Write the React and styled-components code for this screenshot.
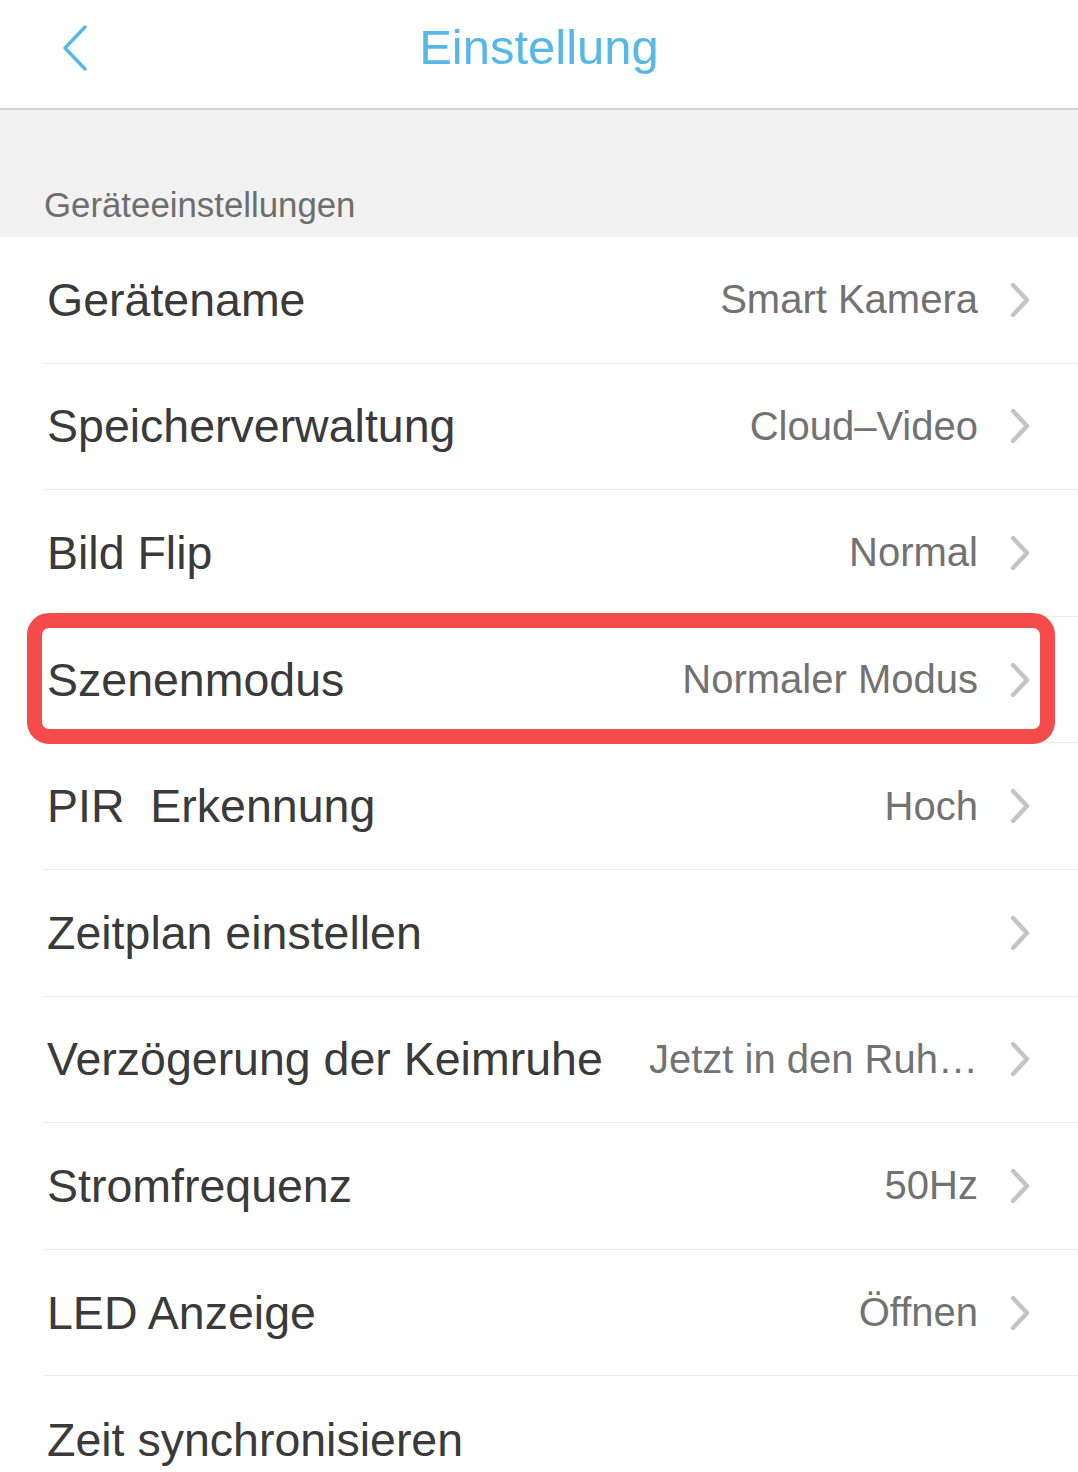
import React from 'react';
import styled, { createGlobalStyle } from 'styled-components';

const GlobalStyle = createGlobalStyle`
  html, body {
    margin: 0;
    padding: 0;
    background: #ffffff;
    font-family: "Liberation Sans", Arial, Helvetica, sans-serif;
  }
  * { box-sizing: border-box; }
`;

const Screen = styled.div`
  width: 1078px;
  height: 1472px;
  overflow: hidden;
  background: #ffffff;
`;

const Header = styled.div`
  height: 110px;
  display: flex;
  align-items: center;
  position: relative;
  border-bottom: 2px solid #d2d2d2;
  background: #ffffff;
`;

const BackButton = styled.div`
  position: absolute;
  left: 60px;
  top: 24px;
  width: 30px;
  height: 48px;
  display: flex;
  align-items: center;
  justify-content: center;
`;

const Title = styled.h1`
  flex: 1;
  margin: 0;
  padding-bottom: 14px;
  text-align: center;
  font-size: 49px;
  font-weight: 400;
  color: #56b8e7;
`;

const Section = styled.div`
  height: 127px;
  background: #f2f2f2;
  display: flex;
  align-items: flex-end;
  padding: 0 0 12px 44px;
  font-size: 34.8px;
  color: #6e6e6e;
`;

const List = styled.div`
  padding-left: 44px;
`;

const Row = styled.div`
  position: relative;
  height: 126.6px;
  display: flex;
  align-items: center;
  padding-right: 48px;
  border-bottom: ${(p) => (p.last ? 'none' : '1px solid #ececec')};
`;

const Label = styled.span`
  padding-left: 3px;
  font-size: 46.5px;
  color: #3a3a3a;
  white-space: pre;
  flex-shrink: 0;
`;

const Value = styled.span`
  flex: 1;
  text-align: right;
  font-size: 40px;
  color: #727272;
  white-space: nowrap;
  overflow: hidden;
  padding-left: 32px;
`;

const Chevron = styled.svg`
  width: 20px;
  height: 36px;
  margin-left: 32px;
  flex-shrink: 0;
`;

const Highlight = styled.div`
  position: absolute;
  top: -4px;
  bottom: -2px;
  left: -17px;
  right: 23px;
  border: 15px solid #f54b4a;
  border-radius: 22px;
  pointer-events: none;
`;

const rows = [
  { label: 'Gerätename', value: 'Smart Kamera' },
  { label: 'Speicherverwaltung', value: 'Cloud–Video' },
  { label: 'Bild Flip', value: 'Normal' },
  { label: 'Szenenmodus', value: 'Normaler Modus', marked: true },
  { label: 'PIR  Erkennung', value: 'Hoch' },
  { label: 'Zeitplan einstellen', value: '' },
  { label: 'Verzögerung der Keimruhe', value: 'Jetzt in den Ruh…' },
  { label: 'Stromfrequenz', value: '50Hz' },
  { label: 'LED Anzeige', value: 'Öffnen' },
  { label: 'Zeit synchronisieren', value: '', noArrow: true, last: true },
];

const Arrow = () => (
  <Chevron viewBox="0 0 20 36">
    <polyline
      points="3,3 17,18 3,33"
      fill="none"
      stroke="#c4c4c4"
      strokeWidth="4.4"
      strokeLinecap="round"
      strokeLinejoin="round"
    />
  </Chevron>
);

export default function App() {
  return (
    <Screen>
      <GlobalStyle />
      <Header>
        <BackButton>
          <svg width="30" height="48" viewBox="0 0 30 48">
            <polyline
              points="25,3 5,24 25,45"
              fill="none"
              stroke="#56b8e7"
              strokeWidth="3.4"
              strokeLinecap="round"
              strokeLinejoin="round"
            />
          </svg>
        </BackButton>
        <Title>Einstellung</Title>
      </Header>
      <Section>Geräteeinstellungen</Section>
      <List>
        {rows.map((r) => (
          <Row key={r.label} last={r.last}>
            <Label>{r.label}</Label>
            <Value>{r.value}</Value>
            {!r.noArrow && <Arrow />}
            {r.marked && <Highlight />}
          </Row>
        ))}
      </List>
    </Screen>
  );
}
